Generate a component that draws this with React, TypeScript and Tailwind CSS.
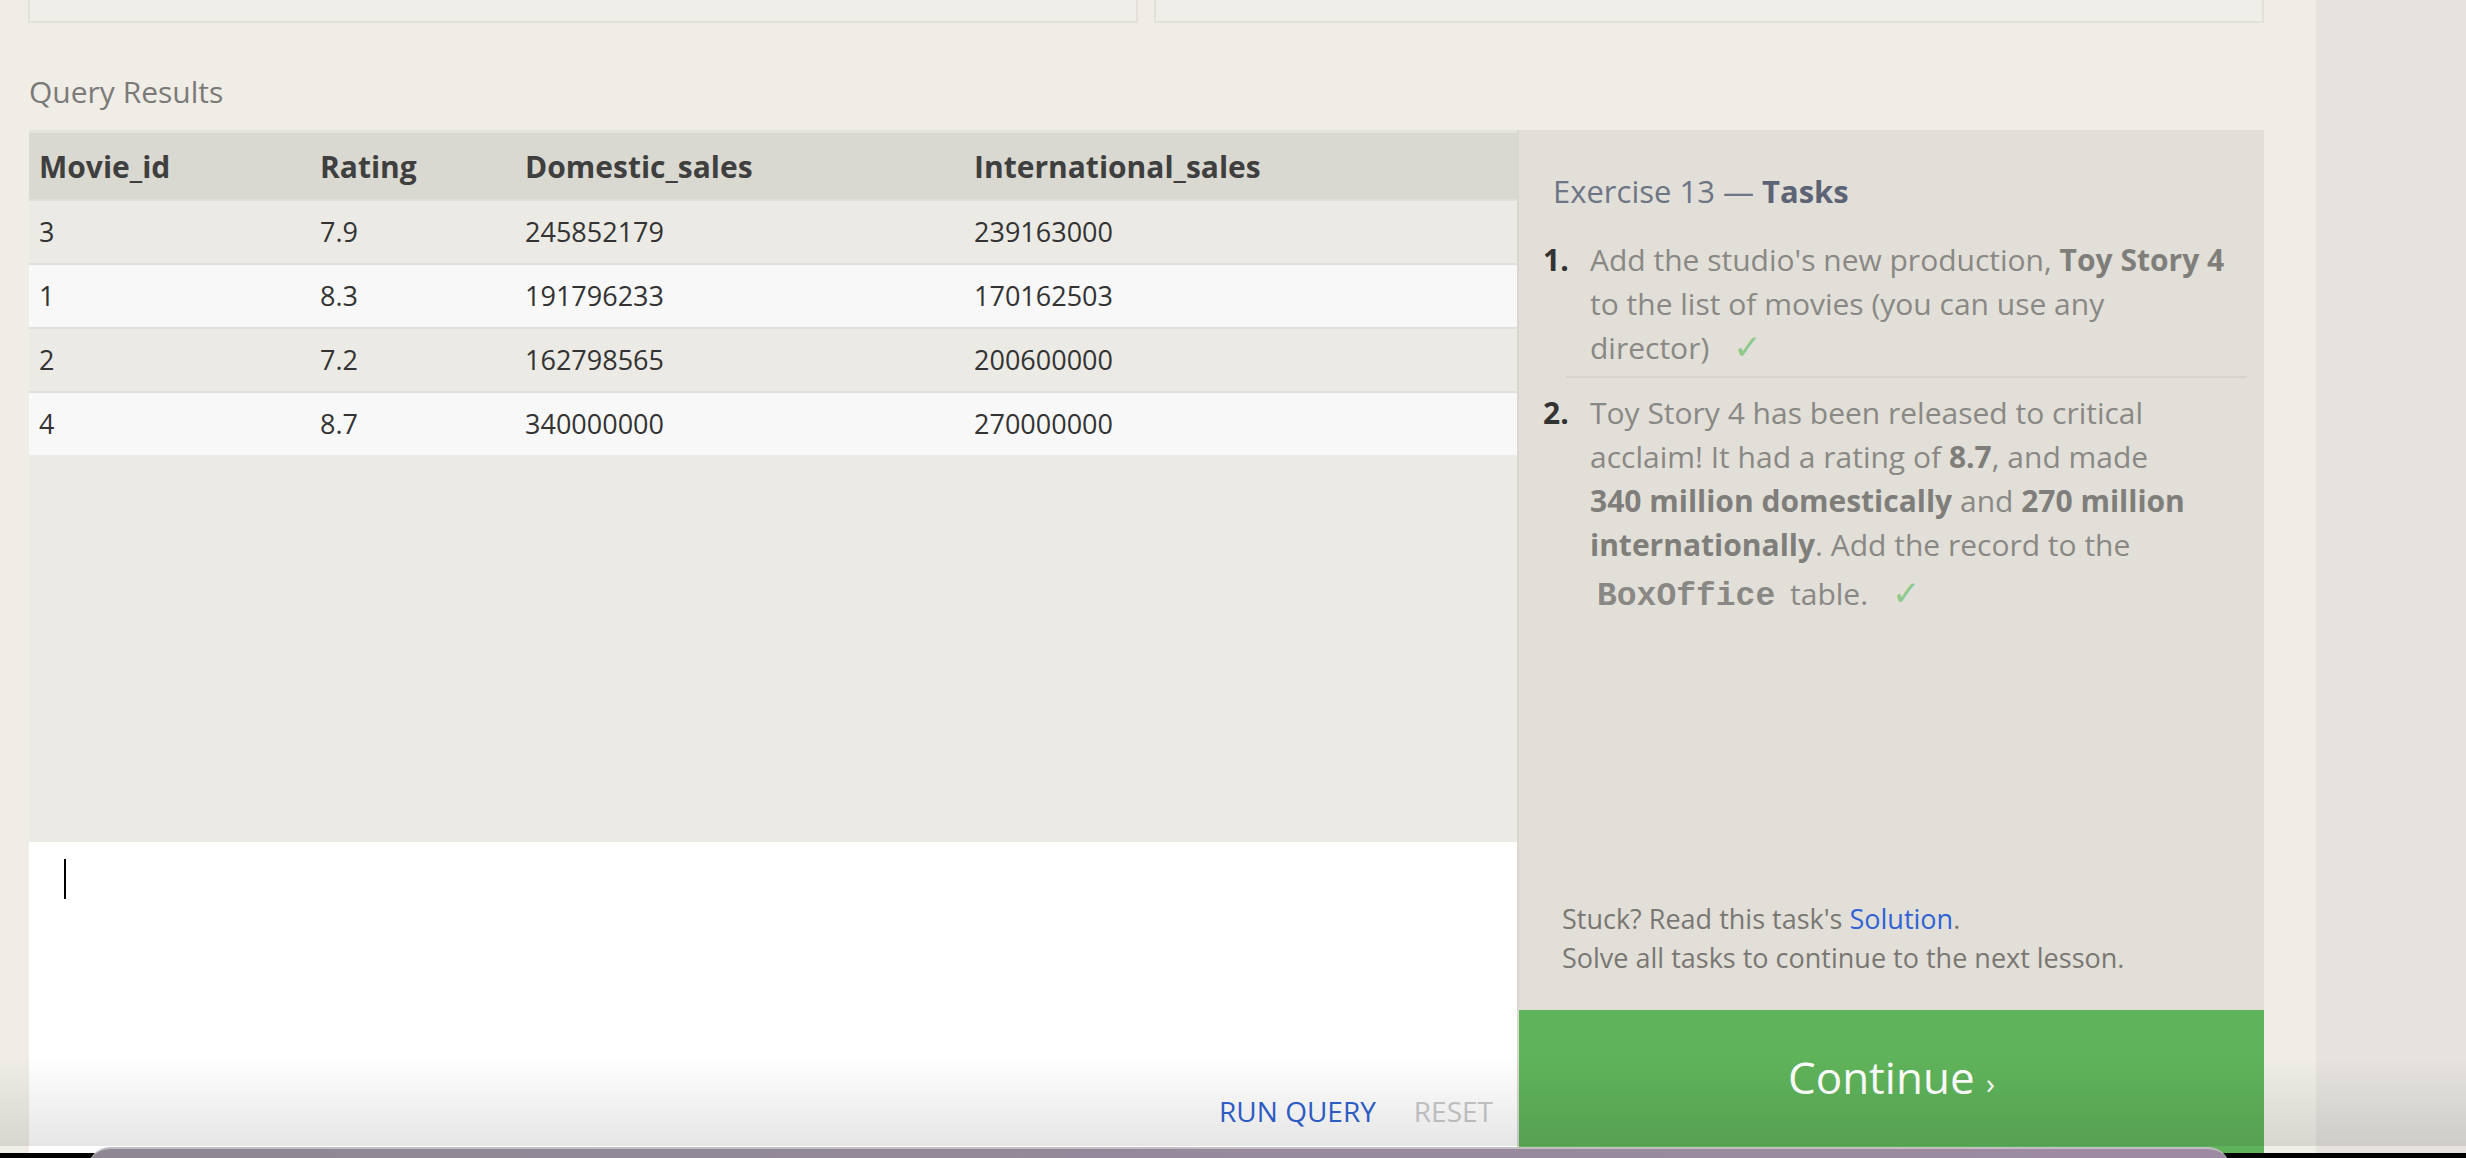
const rows = [
  { id: "3", rating: "7.9", domestic: "245852179", intl: "239163000" },
  { id: "1", rating: "8.3", domestic: "191796233", intl: "170162503" },
  { id: "2", rating: "7.2", domestic: "162798565", intl: "200600000" },
  { id: "4", rating: "8.7", domestic: "340000000", intl: "270000000" },
];

const cols = "grid grid-cols-[281px_205px_449px_1fr] px-[10px]";

function Check() {
  return <span className="ml-[24px] font-['DejaVu_Sans',sans-serif] text-[34px] leading-[0] text-[#8cc98a]">✓</span>;
}

export default function App() {
  return (
    <div className="relative h-[1158px] w-[2466px] overflow-hidden bg-[#efede6] font-['Open_Sans',sans-serif]">
      <div className="flex h-full">
        <div className="w-[2316px] shrink-0 pl-[28px]">
          {/* panels above, cut off by the viewport */}
          <div className="flex h-[23px] gap-[16px]">
            <div className="w-[1110px] border-x-2 border-b-2 border-[#e3e1da] bg-[#f0eee8]" />
            <div className="w-[1110px] border-x-2 border-b-2 border-[#e3e1da] bg-[#f0eee8]" />
          </div>

          <h2 className="pt-[51px] pb-[20px] pl-[1px] text-[30px] leading-[36px] text-[#7b7a78]">Query Results</h2>

          <div className="flex h-[1028px] w-[2236px]">
            {/* results + editor */}
            <div className="flex w-[1489px] flex-col pl-[1px]">
              <div className="flex h-[712px] flex-col bg-[#ebeae4]">
                <div className={`${cols} h-[69px] items-center border-t-[3px] border-[#e4e3dd] bg-[#dad9d1] text-[30px] font-bold text-[#3f3f3f]`}>
                  <span>Movie_id</span>
                  <span>Rating</span>
                  <span>Domestic_sales</span>
                  <span>International_sales</span>
                </div>
                {rows.map((r, i) => (
                  <div
                    key={r.id}
                    className={`${cols} h-[64px] items-center border-t-2 border-[#dfded8] text-[27px] text-[#333] ${i % 2 === 1 ? "bg-[#f8f8f8]" : "bg-[#ebeae4]"}`}
                  >
                    <span>{r.id}</span>
                    <span>{r.rating}</span>
                    <span>{r.domestic}</span>
                    <span>{r.intl}</span>
                  </div>
                ))}
              </div>

              <div className="flex flex-1 flex-col bg-white">
                <div className="pl-[35px] pt-[17px]">
                  <div className="h-[40px] w-[2px] bg-black" />
                </div>
                <div className="mt-[195px] flex justify-end gap-[38px] pr-[24px] text-[28px] leading-[34px]">
                  <span className="text-[#2f62d0]">RUN QUERY</span>
                  <span className="text-[#c9c9c9]">RESET</span>
                </div>
              </div>
            </div>

            {/* tasks */}
            <div className="flex w-[747px] flex-col border-l-2 border-[#d9d7d0]">
              <div className="flex h-[880px] flex-col bg-[#e1dfd8]">
                <h3 className="pl-[34px] pt-[41px] text-[31px] leading-[40px] text-[#6e7585]">
                  Exercise 13 — <span className="font-bold text-[#5c6375]">Tasks</span>
                </h3>

                <ol className="mt-[27px] pr-[17px] text-[30px] leading-[44px] text-[#8a8884]">
                  <li className="flex">
                    <span className="w-[47px] shrink-0 pl-[24px] font-bold text-[#333]">1.</span>
                    <div className="flex-1 border-b-2 border-[#d5d3ca] pb-[6px] pl-[24px]">
                      Add the studio's new production, <b className="text-[#7f7e7a]">Toy Story 4</b> to the list of
                      movies (you can use any director)
                      <Check />
                    </div>
                  </li>
                  <li className="flex pt-[13px]">
                    <span className="w-[47px] shrink-0 pl-[24px] font-bold text-[#333]">2.</span>
                    <div className="flex-1 pl-[24px]">
                      Toy Story 4 has been released to critical acclaim! It had a rating of{" "}
                      <b className="text-[#7f7e7a]">8.7</b>, and made{" "}
                      <b className="text-[#7f7e7a]">340{"\u00a0"}million domestically</b> and{" "}
                      <b className="text-[#7f7e7a]">270{"\u00a0"}million internationally</b>. Add the record to the{" "}
                      <code className="px-[7px] font-['Liberation_Mono',monospace] text-[33px] leading-[60px] font-bold text-[#8a8884]">
                        BoxOffice
                      </code>{" "}
                      table.
                      <Check />
                    </div>
                  </li>
                </ol>

                <div className="mt-auto pb-[33px] pl-[43px] text-[27px] leading-[39px] text-[#7a7773]">
                  <p>
                    Stuck? Read this task's <span className="text-[#2f63d6]">Solution</span>.
                  </p>
                  <p>Solve all tasks to continue to the next lesson.</p>
                </div>
              </div>

              <div className="flex h-[148px] items-start justify-center bg-[#5fb35a] pt-[39px]">
                <span className="text-[44px] leading-[56px] text-white">
                  Continue <span className="text-[30px]">›</span>
                </span>
              </div>
            </div>
          </div>
        </div>
        <div className="flex-1 bg-[#e6e3df]" />
      </div>

      {/* dock shadow and dock over the bottom edge */}
      <div className="pointer-events-none absolute bottom-[12px] left-0 h-[90px] w-full bg-linear-to-b from-transparent to-black/10" />
      <div className="absolute bottom-0 left-0 h-[5px] w-full bg-black" />
      <div className="absolute left-[88px] top-[1147px] h-[24px] w-[2142px] rounded-t-[22px] border-t-2 border-[#c3bec4] bg-linear-to-r from-[#8d8893] to-[#9d8ba3]" />
    </div>
  );
}
